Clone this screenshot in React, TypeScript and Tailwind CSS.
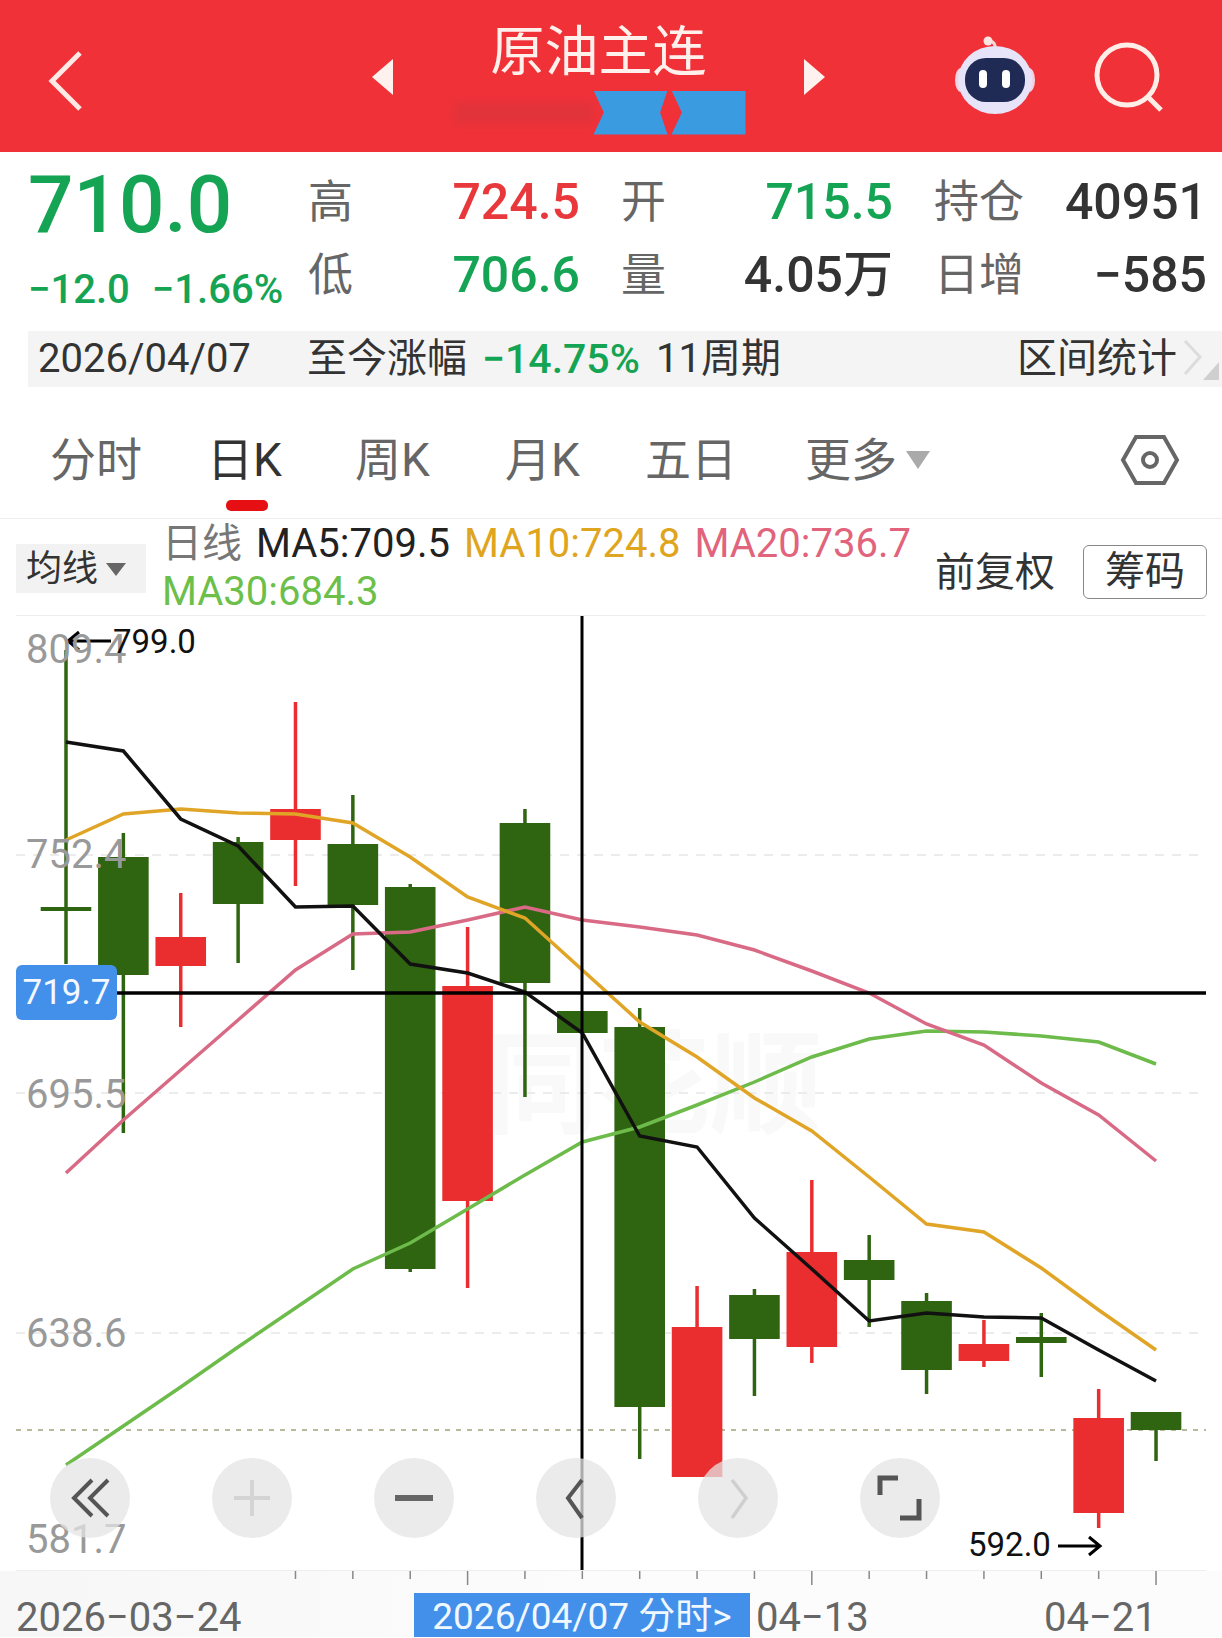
const up = '#ea2d2f';
const down = '#2f6411';

const candleX = (i: number) => 66 + i * 57.37;

// wickTop, wickBottom, bodyTop, bodyBottom, rising
const candles: [number, number, number, number, boolean][] = [
  [650, 964, 907, 911, false],
  [833, 1133, 857, 975, false],
  [893, 1027, 937, 966, true],
  [837, 963, 842, 904, false],
  [702, 886, 809, 840, true],
  [795, 970, 844, 905, false],
  [884, 1272, 887, 1269, false],
  [927, 1288, 986, 1201, true],
  [809, 1097, 823, 983, false],
  [1011, 1033, 1011, 1033, false],
  [1008, 1459, 1027, 1407, false],
  [1286, 1477, 1327, 1477, true],
  [1289, 1396, 1295, 1339, false],
  [1180, 1363, 1252, 1347, true],
  [1235, 1327, 1260, 1280, false],
  [1293, 1394, 1301, 1370, false],
  [1320, 1367, 1344, 1361, true],
  [1313, 1377, 1337, 1343, false],
  [1389, 1528, 1418, 1513, true],
  [1412, 1461, 1412, 1430, false],
];

const ma5 = [742, 751, 819, 846, 907, 906, 964, 973, 992, 1033, 1136, 1147, 1218, 1269, 1321, 1313, 1317, 1318, 1350, 1381];
const ma10 = [840, 814, 809, 813, 814, 823, 857, 897, 918, 970, 1022, 1057, 1098, 1131, 1177, 1224, 1232, 1268, 1310, 1350];
const ma20 = [1173, 1120, 1070, 1020, 970, 934, 932, 920, 907, 920, 927, 935, 950, 971, 993, 1024, 1045, 1083, 1115, 1161];
const ma30 = [1465, 1426, 1387, 1347, 1308, 1269, 1243, 1209, 1175, 1142, 1127, 1105, 1082, 1057, 1039, 1031, 1032, 1036, 1042, 1064];

const toPoints = (ys: number[]) => ys.map((y, i) => `${candleX(i)},${y}`).join(' ');

const gridLines = [855, 1093, 1333];

const axisLabels = [
  { text: '809.4', cls: 'top-[10px]' },
  { text: '752.4', cls: 'top-[215px]' },
  { text: '695.5', cls: 'top-[455px]' },
  { text: '638.6', cls: 'top-[694px]' },
  { text: '581.7', cls: 'top-[900px]' },
];

function Robot() {
  return (
    <svg width="84" height="84" viewBox="0 0 84 84">
      <path d="M42 16c1-6-2-9-6-9" fill="none" stroke="#f7d9d9" strokeWidth="3" />
      <circle cx="35" cy="7" r="4.5" fill="#fde6e2" />
      <ellipse cx="8" cy="46" rx="6" ry="12" fill="#f0d4e4" />
      <ellipse cx="76" cy="46" rx="6" ry="12" fill="#f0d4e4" />
      <ellipse cx="42" cy="46" rx="37" ry="34" fill="#e7e3f8" />
      <rect x="12" y="24" width="60" height="44" rx="21" fill="#1f2b54" />
      <rect x="26" y="36" width="8" height="18" rx="4" fill="#ffffff" />
      <rect x="49" y="36" width="8" height="18" rx="4" fill="#ffffff" />
    </svg>
  );
}

function Header() {
  return (
    <div className="flex h-[152px] items-center bg-[#f03138]">
      <svg className="ml-[47px] mt-[10px] shrink-0" width="38" height="64" viewBox="0 0 38 64">
        <path d="M33 4 L5 32 L33 60" fill="none" stroke="#ffe9e4" strokeWidth="5" />
      </svg>
      <svg className="ml-[287px] mt-[2px] shrink-0" width="22" height="36" viewBox="0 0 22 36">
        <path d="M21 0 V36 L0 18 Z" fill="#fff2ee" />
      </svg>
      <div className="ml-[2px] flex w-[405px] shrink-0 flex-col items-center pt-[2px]">
        <div className="text-[54px] leading-[66px] text-[#fff0ec]">原油主连</div>
        <div className="mt-[5px] flex h-[44px] items-center pl-[2px]">
          <div className="h-[22px] w-[140px] bg-[#d8353c] opacity-60 blur-[4px]" />
          <div className="h-[44px] w-[74px] bg-[#3a9be0] blur-[0.5px] [clip-path:polygon(0_0,100%_0,90%_50%,100%_100%,0_100%,14%_50%)]" />
          <div className="ml-[4px] h-[44px] w-[74px] bg-[#3a9be0] blur-[0.5px] [clip-path:polygon(0_0,100%_0,100%_100%,0_100%,14%_50%)]" />
        </div>
      </div>
      <svg className="ml-[2px] mt-[2px] shrink-0" width="22" height="36" viewBox="0 0 22 36">
        <path d="M1 0 V36 L22 18 Z" fill="#fff2ee" />
      </svg>
      <div className="ml-[128px] shrink-0">
        <Robot />
      </div>
      <svg className="ml-[55px] mt-[4px] shrink-0" width="74" height="74" viewBox="0 0 74 74">
        <circle cx="35" cy="34" r="30" fill="none" stroke="#ffeee8" strokeWidth="5" />
        <path d="M55 55 L69 69" stroke="#ffeee8" strokeWidth="5" />
      </svg>
    </div>
  );
}

function QuoteCell({ label, value, color, labelWidth }: { label: string; value: string; color: string; labelWidth: string }) {
  return (
    <div className="flex h-[50px] items-center justify-between">
      <span className={`text-[45px] leading-none text-[#666] ${labelWidth}`}>{label}</span>
      <span className={`text-[50px] font-medium leading-none ${color}`}>{value}</span>
    </div>
  );
}

function Quote() {
  return (
    <div className="flex h-[179px] pl-[28px]">
      <div className="w-[280px] shrink-0">
        <div className="mt-[9px] text-[80px] font-medium leading-[88px] text-[#15a454]">710.0</div>
        <div className="mt-[18px] flex gap-[22px] text-[40px] font-medium leading-[46px] text-[#15a454]">
          <span>−12.0</span>
          <span>−1.66%</span>
        </div>
      </div>
      <div className="grid h-[148px] w-[900px] grid-cols-[272px_272px_273px] content-between gap-x-[41px] pt-[25px]">
        <QuoteCell label="高" value="724.5" color="text-[#e8383b]" labelWidth="w-[45px]" />
        <QuoteCell label="开" value="715.5" color="text-[#15a454]" labelWidth="w-[45px]" />
        <QuoteCell label="持仓" value="40951" color="text-[#333]" labelWidth="w-[90px]" />
        <QuoteCell label="低" value="706.6" color="text-[#15a454]" labelWidth="w-[45px]" />
        <QuoteCell label="量" value="4.05万" color="text-[#333]" labelWidth="w-[45px]" />
        <QuoteCell label="日增" value="−585" color="text-[#333]" labelWidth="w-[90px]" />
      </div>
    </div>
  );
}

function RangeBar() {
  return (
    <div className="ml-[28px] flex h-[56px] items-center bg-[#f4f4f4] pl-[10px] text-[40px] leading-none text-[#333]">
      <span className="w-[269px] shrink-0">2026/04/07</span>
      <span className="w-[175px] shrink-0 whitespace-nowrap">至今涨幅</span>
      <span className="w-[174px] shrink-0 text-[41px] font-medium text-[#15a454]">−14.75%</span>
      <span className="shrink-0 whitespace-nowrap">11周期</span>
      <span className="ml-auto whitespace-nowrap">区间统计</span>
      <svg className="ml-[6px] mr-[1px] shrink-0" width="38" height="46" viewBox="0 0 38 46">
        <path d="M2 5 L17 21 L2 38" fill="none" stroke="#dcdcdc" strokeWidth="3" />
        <path d="M36 26 V44 H20 Z" fill="#cfcfcf" />
      </svg>
    </div>
  );
}

function Tabs() {
  const tabs = [
    { text: '分时', cls: 'ml-[50px] w-[90px] text-[#666]' },
    { text: '日K', cls: 'ml-[67px] w-[78px] text-[#333]' },
    { text: '周K', cls: 'ml-[70px] w-[78px] text-[#666]' },
    { text: '月K', cls: 'ml-[72px] w-[78px] text-[#666]' },
    { text: '五日', cls: 'ml-[62px] w-[90px] text-[#666]' },
    { text: '更多', cls: 'ml-[70px] w-[92px] text-[#666]' },
  ];
  return (
    <div className="relative mt-[13px] flex h-[119px] items-center border-b border-[#eeeeee] pt-[2px]">
      {tabs.map((t) => (
        <span key={t.text} className={`whitespace-nowrap text-[46px] leading-none ${t.cls}`}>
          {t.text}
        </span>
      ))}
      <svg className="ml-[9px] shrink-0" width="24" height="18" viewBox="0 0 24 18">
        <path d="M0 0 H24 L12 18 Z" fill="#aaaaaa" />
      </svg>
      <svg className="ml-[190px] shrink-0" width="60" height="52" viewBox="0 0 60 52">
        <path d="M16 3 H44 L57 26 L44 49 H16 L3 26 Z" fill="none" stroke="#666" strokeWidth="4" />
        <circle cx="30" cy="26" r="7" fill="none" stroke="#666" strokeWidth="4" />
      </svg>
      <div className="absolute bottom-[7px] left-[226px] h-[11px] w-[42px] rounded-[5px] bg-[#e60f14]" />
    </div>
  );
}

function MaRow() {
  return (
    <div className="flex h-[96px] pl-[16px]">
      <div className="mt-[25px] flex h-[49px] w-[130px] shrink-0 items-center bg-[#f2f2f2] pl-[10px]">
        <span className="text-[36px] leading-none text-[#333]">均线</span>
        <svg className="ml-[8px] mt-[2px]" width="20" height="13" viewBox="0 0 20 13">
          <path d="M0 0 H20 L10 13 Z" fill="#666" />
        </svg>
      </div>
      <div className="ml-[16px] w-[762px] shrink-0 pt-[1px] text-[40px] leading-[48px]">
        <span className="text-[#777]">日线</span>
        <span className="ml-[14px] text-[#222]">MA5:709.5</span>
        <span className="ml-[14px] text-[#dfa51e]">MA10:724.8</span>
        <span className="ml-[14px] text-[#e1637c]">MA20:736.7</span>
        <div className="text-[#6cc04a]">MA30:684.3</div>
      </div>
      <span className="ml-[11px] mt-[29px] whitespace-nowrap text-[40px] leading-[50px] text-[#333]">前复权</span>
      <div className="ml-[28px] mt-[26px] flex h-[54px] w-[124px] items-center justify-center rounded-[6px] border border-[#888] text-[40px] leading-none text-[#333]">
        筹码
      </div>
    </div>
  );
}

function ChartSvg() {
  return (
    <svg className="absolute inset-0" width="1191" height="956" viewBox="16 616 1191 956">
      {gridLines.map((y) => (
        <line key={y} x1="16" x2="1207" y1={y} y2={y} stroke="#e6e6e6" strokeWidth="1.5" strokeDasharray="9 8" />
      ))}
      <line x1="16" x2="1207" y1="1430" y2="1430" stroke="#b8b89c" strokeWidth="2" strokeDasharray="5 6" />
      {candles.map(([wt, wb, bt, bb, rising], i) => {
        const x = candleX(i);
        const color = rising ? up : down;
        return (
          <g key={i}>
            <line x1={x} x2={x} y1={wt} y2={wb} stroke={color} strokeWidth="3.5" />
            <rect x={x - 25.3} y={bt} width="50.6" height={bb - bt} fill={color} />
          </g>
        );
      })}
      <polyline points={toPoints(ma30)} fill="none" stroke="#6dbb4a" strokeWidth="3.5" />
      <polyline points={toPoints(ma20)} fill="none" stroke="#d96a85" strokeWidth="3.5" />
      <polyline points={toPoints(ma10)} fill="none" stroke="#e0a526" strokeWidth="3.5" />
      <polyline points={toPoints(ma5)} fill="none" stroke="#111111" strokeWidth="3.5" />
      <line x1="582" x2="582" y1="616" y2="1572" stroke="#000" strokeWidth="3" />
      <line x1="100" x2="1207" y1="993" y2="993" stroke="#000" strokeWidth="3.5" />
      {/* high / low markers */}
      <path d="M111 641 H68 M79 632 L68 641 L79 650" fill="none" stroke="#000" strokeWidth="3" />
      <path d="M1058 1546 H1100 M1089 1537 L1100 1546 L1089 1555" fill="none" stroke="#000" strokeWidth="3" />
    </svg>
  );
}

function ControlButton({ children }: { children: React.ReactNode }) {
  return <div className="flex h-[80px] w-[80px] shrink-0 items-center justify-center rounded-full bg-[#e4e4e4]/75">{children}</div>;
}

function Controls() {
  return (
    <div className="absolute left-[34px] top-[842px] flex gap-[82px]">
      <ControlButton>
        <svg width="44" height="44" viewBox="0 0 44 44" fill="none" stroke="#555" strokeWidth="4">
          <path d="M24 4 L6 22 L24 40 M40 4 L22 22 L40 40" />
        </svg>
      </ControlButton>
      <ControlButton>
        <svg width="40" height="40" viewBox="0 0 40 40" stroke="#d4d4d4" strokeWidth="4">
          <path d="M2 20 H38 M20 2 V38" />
        </svg>
      </ControlButton>
      <ControlButton>
        <svg width="40" height="10" viewBox="0 0 40 10">
          <rect width="38" height="6" y="2" x="1" fill="#666" />
        </svg>
      </ControlButton>
      <ControlButton>
        <svg width="32" height="48" viewBox="0 0 32 48" fill="none" stroke="#555" strokeWidth="4">
          <path d="M22 6 L8 24 L22 44" />
        </svg>
      </ControlButton>
      <ControlButton>
        <svg width="32" height="48" viewBox="0 0 32 48" fill="none" stroke="#cfcfcf" strokeWidth="3.5">
          <path d="M10 6 L24 24 L10 44" />
        </svg>
      </ControlButton>
      <ControlButton>
        <svg width="46" height="46" viewBox="0 0 46 46" fill="none" stroke="#555" strokeWidth="5">
          <path d="M21 3 H3 V20 M42 24 V43 H23" />
        </svg>
      </ControlButton>
    </div>
  );
}

function Chart() {
  return (
    <div className="relative mx-[16px] h-[956px] overflow-hidden border-y border-[#eeeeee]">
      <div className="absolute left-[470px] top-[415px] whitespace-nowrap text-[112px] font-bold leading-none text-[#f9f9f9]">
        同花顺
      </div>
      <ChartSvg />
      {axisLabels.map((l) => (
        <span key={l.text} className={`absolute left-[10px] text-[40px] leading-[48px] text-[#999] ${l.cls}`}>
          {l.text}
        </span>
      ))}
      <span className="absolute left-[97px] top-[6px] text-[33px] leading-[40px] text-[#111]">799.0</span>
      <span className="absolute left-[952px] top-[909px] text-[33px] leading-[40px] text-[#111]">592.0</span>
      <div className="absolute left-0 top-[349px] flex h-[55px] w-[101px] items-center justify-center rounded-[6px] bg-[#4390ea] text-[35px] leading-none text-[#f4f8ff]">
        719.7
      </div>
      <Controls />
    </div>
  );
}

function AxisTicks() {
  return (
    <svg className="absolute left-0 top-0" width="1222" height="20" viewBox="0 0 1222 20">
      {candles.map((_, i) => {
        if (i < 4) return null;
        const long = i % 6 === 1;
        const x = candleX(i);
        return <line key={i} x1={x} x2={x} y1="0" y2={long ? 14 : 8} stroke="#888" strokeWidth="1.5" />;
      })}
    </svg>
  );
}

function DateAxis() {
  return (
    <div className="relative flex h-[66px] items-end bg-gradient-to-r from-[#f7f7f7] via-[#fcfcfc] to-[#fcfcfc] text-[40px] leading-[38px] text-[#666]">
      <AxisTicks />
      <span className="ml-[16px] w-[398px] shrink-0 whitespace-nowrap">2026−03−24</span>
      <div className="h-[44px] w-[336px] shrink-0 whitespace-nowrap bg-[#4390ea] pt-[4px] text-center text-[37px] leading-[40px] text-[#f0f8ff]">
        2026/04/07 分时&gt;
      </div>
      <span className="ml-[6px] w-[288px] shrink-0 whitespace-nowrap">04−13</span>
      <span className="whitespace-nowrap">04−21</span>
    </div>
  );
}

export default function App() {
  return (
    <div className="h-[1638px] w-[1222px] overflow-hidden bg-white font-['Roboto','Noto_Sans_CJK_SC',sans-serif]">
      <Header />
      <Quote />
      <RangeBar />
      <Tabs />
      <MaRow />
      <Chart />
      <DateAxis />
    </div>
  );
}
